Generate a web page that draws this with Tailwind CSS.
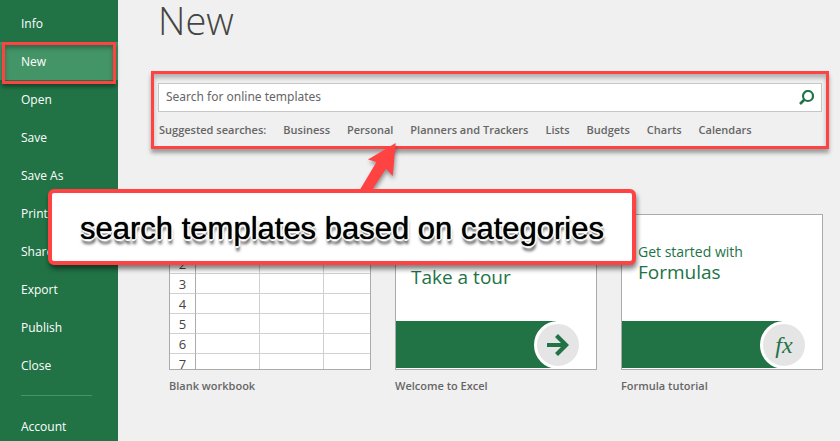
<!DOCTYPE html>
<html lang="en">
<head>
  <meta charset="UTF-8">
  <meta name="viewport" content="width=device-width, initial-scale=1.0">
  <title>New - Excel</title>
  <script src="https://cdn.jsdelivr.net/npm/@tailwindcss/browser@4"></script>
</head>
<body class="relative flex h-screen overflow-hidden bg-[#f0f0f0] font-['Open_Sans','Noto_Sans',sans-serif] text-xs text-[#666666]">

  <!-- Sidebar -->
  <nav class="w-[118px] shrink-0 bg-[#217346] pt-1 text-white">
    <a href="#" class="flex h-[38px] items-center pt-[2px] pl-[21px]">Info</a>
    <a href="#" class="relative flex h-[38px] items-center bg-[#439467] pt-[2px] pl-[21px]">
      New
      <span class="absolute top-0 left-[2px] h-[42px] w-[114px] border-3 border-[#ff4343] shadow-[0_3px_4px_rgba(0,0,0,0.4),inset_0_3px_4px_rgba(0,0,0,0.3)]"></span>
    </a>
    <a href="#" class="flex h-[38px] items-center pt-[2px] pl-[21px]">Open</a>
    <a href="#" class="flex h-[38px] items-center pt-[2px] pl-[21px]">Save</a>
    <a href="#" class="flex h-[38px] items-center pt-[2px] pl-[21px]">Save As</a>
    <a href="#" class="flex h-[38px] items-center pt-[2px] pl-[21px]">Print</a>
    <a href="#" class="flex h-[38px] items-center pt-[2px] pl-[21px]">Share</a>
    <a href="#" class="flex h-[38px] items-center pt-[2px] pl-[21px]">Export</a>
    <a href="#" class="flex h-[38px] items-center pt-[2px] pl-[21px]">Publish</a>
    <a href="#" class="flex h-[38px] items-center pt-[2px] pl-[21px]">Close</a>
    <hr class="mt-[11px] mr-[26px] mb-[11px] ml-[21px] border-[#439467]">
    <a href="#" class="flex h-[38px] items-center pt-[2px] pl-[21px]">Account</a>
  </nav>

  <main class="min-w-0 flex-1 pr-[11px] pl-[33px]">
    <h1 class="flex h-[71px] items-start pl-[7px] text-[38px] leading-10 font-light text-[#444444]">New</h1>

    <!-- Search -->
    <section class="h-[78px] border-3 border-[#ff4343] px-1 pt-[9px] shadow-[0_4px_4px_rgba(0,0,0,0.35),inset_0_4px_4px_rgba(0,0,0,0.25)]">
      <form class="flex h-[29px] items-center border border-[#c6c6c6] bg-white pr-[7px]">
        <label for="search" class="sr-only">Search for online templates</label>
        <input id="search" type="text" placeholder="Search for online templates" class="h-full min-w-0 flex-1 pb-[2px] pl-[7px] font-['Noto_Sans',sans-serif] text-xs placeholder-[#666666] outline-none">
        <button type="button" aria-label="Search">
          <svg class="h-4 w-4" viewBox="0 0 16 16" fill="none" stroke="#217346">
            <circle cx="10" cy="6" r="5" stroke-width="2.2" />
            <path d="M6.5 9.5L2 14" stroke-width="2.6" />
          </svg>
        </button>
      </form>
      <div class="mt-[10px] flex gap-[17px] pl-px text-[11px] leading-4 font-semibold whitespace-nowrap">
        <span>Suggested searches:</span>
        <a href="#">Business</a>
        <a href="#">Personal</a>
        <a href="#">Planners and Trackers</a>
        <a href="#">Lists</a>
        <a href="#">Budgets</a>
        <a href="#">Charts</a>
        <a href="#">Calendars</a>
      </div>
    </section>

    <!-- Templates -->
    <section class="mt-[65px] flex gap-6 pl-[18px] text-[11px]">
      <a href="#" class="w-[202px]">
        <div class="h-[156px] overflow-hidden border border-[#ababab] bg-white">
          <table class="w-full table-fixed border-separate border-spacing-0 text-center text-[13px] text-[#444444]">
            <thead>
              <tr class="h-[19px]">
                <th class="w-[26px] border-r border-b border-r-[#ababab] border-b-[#d0d0d0]"></th>
                <th class="w-[64px] border-r border-b border-[#d0d0d0]"></th>
                <th class="w-[64px] border-r border-b border-[#d0d0d0]"></th>
                <th class="border-b border-[#d0d0d0]"></th>
              </tr>
            </thead>
            <tbody class="leading-[18px] [&_td]:border-r [&_td]:border-b [&_td]:border-[#d0d0d0] [&_td]:pt-px [&_td:first-child]:border-r-[#ababab] [&_td:last-child]:border-r-0">
              <tr class="h-5"><td></td><td></td><td></td><td></td></tr>
              <tr class="h-5"><td>2</td><td></td><td></td><td></td></tr>
              <tr class="h-5"><td>3</td><td></td><td></td><td></td></tr>
              <tr class="h-5"><td>4</td><td></td><td></td><td></td></tr>
              <tr class="h-5"><td>5</td><td></td><td></td><td></td></tr>
              <tr class="h-5"><td>6</td><td></td><td></td><td></td></tr>
              <tr class="h-5"><td>7</td><td></td><td></td><td></td></tr>
            </tbody>
          </table>
        </div>
        <p class="mt-2 leading-4 font-semibold">Blank workbook</p>
      </a>

      <a href="#" class="w-[202px]">
        <div class="relative flex h-[156px] flex-col justify-between border border-[#ababab] bg-white pb-px text-[#217346]">
          <p class="pt-[50px] pl-[15px] text-[19px] leading-6">Take a tour</p>
          <div class="h-[47px] w-[160px] bg-[#217346]"></div>
          <div class="absolute bottom-0 left-[138px] flex h-12 w-12 items-center justify-center rounded-full border-3 border-white bg-[#e5e5e5]">
            <svg class="h-6 w-6" viewBox="0 0 24 24" fill="#217346">
              <path d="M1 10H15L9 4L12 1L23 12L12 23L9 20L15 14H1Z" />
            </svg>
          </div>
        </div>
        <p class="mt-2 leading-4 font-semibold">Welcome to Excel</p>
      </a>

      <a href="#" class="w-[202px]">
        <div class="relative flex h-[156px] flex-col justify-between border border-[#ababab] bg-white pb-px text-[#217346]">
          <div class="pt-[27px] pl-4">
            <p class="text-sm leading-5">Get started with</p>
            <p class="text-[19px] leading-5">Formulas</p>
          </div>
          <div class="h-[47px] w-[160px] bg-[#217346]"></div>
          <div class="absolute bottom-0 left-[138px] flex h-12 w-12 items-center justify-center rounded-full border-3 border-white bg-[#e5e5e5] font-['Liberation_Serif',serif] text-2xl leading-6 italic">fx</div>
        </div>
        <p class="mt-2 leading-4 font-semibold">Formula tutorial</p>
      </a>
    </section>
  </main>

  <!-- Callout -->
  <svg class="absolute top-[140px] left-[355px] h-[56px] w-[50px] drop-shadow-[1px_3px_2px_rgba(0,0,0,0.4)]" viewBox="355 140 50 56" fill="#ff4343">
    <path d="M395.7 143L368 159.5L376.5 162L358 193H370L386 168.7L392.7 176Z" />
  </svg>
  <div class="absolute top-[189px] left-[48px] flex h-[76px] w-[588px] items-center justify-center rounded-md border-4 border-[#ff4343] bg-white pt-1 font-['Liberation_Sans',sans-serif] text-[31px] whitespace-nowrap text-black shadow-[1px_4px_5px_rgba(0,0,0,0.5)] [text-shadow:0_0_1px_#000,2px_0_0_#fff,-2px_0_0_#fff,0_2px_0_#fff,0_-2px_0_#fff,1px_1px_0_#fff,1px_5px_3px_rgba(0,0,0,0.7)]">search templates based on categories</div>
</body>
</html>
